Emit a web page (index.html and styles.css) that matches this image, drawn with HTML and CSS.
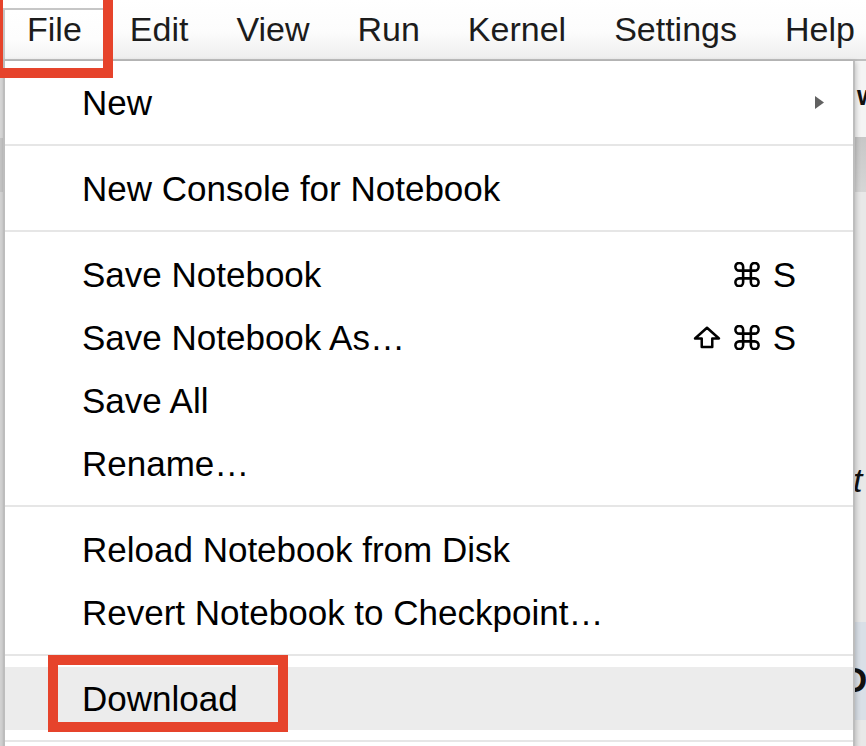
FILE: index.html
```html
<!DOCTYPE html>
<html lang="en">
<head>
<meta charset="utf-8">
<title>File menu</title>
<link rel="stylesheet" href="styles.css">
</head>
<body>
<div class="app">
  <header class="menubar">
    <div class="mb-item active">File</div>
    <div class="mb-item">Edit</div>
    <div class="mb-item">View</div>
    <div class="mb-item">Run</div>
    <div class="mb-item">Kernel</div>
    <div class="mb-item">Settings</div>
    <div class="mb-item">Help</div>
  </header>

  <div class="workspace">
    <div class="edge edge-left">
      <div class="seg l-tab"></div>
      <div class="seg l-toolbar"></div>
      <div class="seg l-rest"></div>
    </div>
    <div class="canvas"></div>
    <div class="edge edge-right">
      <div class="seg r-tab"><span class="peek peek-w">w</span></div>
      <div class="seg r-toolbar"></div>
      <div class="seg r-nb"><span class="peek peek-t">t</span></div>
      <div class="seg r-cell"><span class="peek peek-d">D</span></div>
      <div class="seg r-rest"></div>
    </div>
  </div>

  <nav class="dropdown">
    <div class="item">
      <span class="label">New</span>
      <svg class="sub-arrow" width="9" height="13" viewBox="0 0 9 13"><polygon points="0,0 9,6.5 0,13" fill="#616161"/></svg>
    </div>
    <div class="sep"></div>
    <div class="item"><span class="label">New Console for Notebook</span></div>
    <div class="sep"></div>
    <div class="item">
      <span class="label">Save Notebook</span>
      <span class="keys">
        <svg class="k-cmd" width="28" height="25" viewBox="1.8 2.3 20.4 19.4" fill="none" stroke="#000" stroke-width="2" stroke-linecap="round" stroke-linejoin="round"><path d="M15 6v12a3 3 0 1 0 3-3H6a3 3 0 1 0 3 3V6a3 3 0 1 0-3 3h12a3 3 0 1 0-3-3"/></svg>
        <span class="k-letter">S</span>
      </span>
    </div>
    <div class="item">
      <span class="label">Save Notebook As…</span>
      <span class="keys">
        <svg class="k-shift" width="28" height="23" viewBox="0 0 29 24" fill="none" stroke="#000" stroke-width="2.6" stroke-linejoin="round"><path d="M14.5 1.8 L27 13 H20 V22 H9 V13 H2 Z"/></svg>
        <svg class="k-cmd" width="28" height="25" viewBox="1.8 2.3 20.4 19.4" fill="none" stroke="#000" stroke-width="2" stroke-linecap="round" stroke-linejoin="round"><path d="M15 6v12a3 3 0 1 0 3-3H6a3 3 0 1 0 3 3V6a3 3 0 1 0-3 3h12a3 3 0 1 0-3-3"/></svg>
        <span class="k-letter">S</span>
      </span>
    </div>
    <div class="item"><span class="label">Save All</span></div>
    <div class="item"><span class="label">Rename…</span></div>
    <div class="sep"></div>
    <div class="item"><span class="label">Reload Notebook from Disk</span></div>
    <div class="item"><span class="label">Revert Notebook to Checkpoint…</span></div>
    <div class="sep"></div>
    <div class="item hover"><span class="label">Download</span></div>
    <div class="sep"></div>
  </nav>

  <div class="callout callout-file"></div>
  <div class="callout callout-download"></div>
</div>
</body>
</html>
```

FILE: styles.css
```css
html, body {
  margin: 0;
  padding: 0;
  background: #ffffff;
}

body {
  font-family: "Liberation Sans", Arial, sans-serif;
}

.app {
  position: relative;
  width: 866px;
  height: 746px;
  overflow: hidden;
  display: flex;
  flex-direction: column;
  background: #e9e9e9;
}

/* ---------- menubar ---------- */
.menubar {
  display: flex;
  align-items: flex-end;
  height: 59px;
  padding-left: 3px;
  border-bottom: 2px solid #bfbfbf;
  background: linear-gradient(to bottom, #ffffff 0%, #fcfcfc 55%, #eeeeee 100%);
  font-size: 34px;
  color: #1c1c1c;
  flex: none;
}

.mb-item {
  box-sizing: border-box;
  height: 51px;
  display: flex;
  align-items: center;
  padding: 0 22px 10px 22px;
  border: 2px solid transparent;
  border-bottom: 0;
  white-space: nowrap;
}

.mb-item.active {
  border-color: #c6c6c6;
  background: linear-gradient(to bottom, #ffffff 0%, #fdfdfd 60%, #f3f3f3 100%);
}

/* ---------- page behind the menu ---------- */
.workspace {
  flex: 1;
  display: grid;
  grid-template-columns: 3px 1fr 11px;
}

.edge {
  display: flex;
  flex-direction: column;
  overflow: hidden;
}

.seg {
  flex: none;
  overflow: hidden;
  white-space: nowrap;
}

.edge-left {
  background: #d6d6d6;
}
.l-tab { height: 77px; background: #dadada; }
.l-toolbar { height: 54px; background: #c6c6c6; }
.l-rest { flex: 1; background: #d6d6d6; }

.canvas {
  background: #ffffff;
}

.edge-right {
  background: #e9e9e9;
}
.r-tab { height: 76px; background: #f4f4f4; }
.r-toolbar { height: 55px; background: linear-gradient(to bottom, #c7c7c7, #d6d6d6); }
.r-nb { height: 430px; background: #e8e8e8; }
.r-cell { height: 98px; background: #d9dfe7; }
.r-rest { flex: 1; background: #e8e8e8; }

.peek {
  display: block;
  color: #111111;
}

.peek-w {
  font-size: 27px;
  line-height: 27px;
  font-weight: bold;
  padding-top: 22px;
  padding-left: 2px;
}

.peek-t {
  font-size: 34px;
  line-height: 34px;
  font-style: italic;
  padding-top: 271px;
  margin-left: -2px;
}

.peek-d {
  font-size: 35px;
  line-height: 35px;
  font-weight: bold;
  padding-top: 40px;
  margin-left: -13px;
}

/* ---------- dropdown menu ---------- */
.dropdown {
  position: absolute;
  left: 3px;
  top: 61px;
  width: 852px;
  height: 700px;
  box-sizing: border-box;
  padding-top: 10px;
  border: 2px solid #bdbdbd;
  border-top: 0;
  border-bottom: 0;
  background: #ffffff;
  box-shadow: 1px 1px 5px rgba(0, 0, 0, 0.22);
  font-size: 35px;
  color: #000000;
}

.item {
  height: 63px;
  display: flex;
  align-items: center;
  justify-content: space-between;
  padding: 0 57px 0 77px;
  white-space: nowrap;
}

.item.hover {
  background: #ececec;
}

.sep {
  height: 2px;
  margin: 10px 0 11px;
  background: #e6e6e6;
}

.sub-arrow {
  margin-right: -28px;
}

.keys {
  display: flex;
  align-items: center;
  gap: 12px;
}

.k-cmd,
.k-shift {
  display: block;
}

.k-letter {
  display: block;
  line-height: 35px;
}

/* ---------- annotation callouts ---------- */
.callout {
  position: absolute;
  box-sizing: border-box;
  border: 10px solid #e6432b;
}

.callout-file {
  left: -7px;
  top: -10px;
  width: 120px;
  height: 88px;
}

.callout-download {
  left: 48px;
  top: 655px;
  width: 240px;
  height: 77px;
}
```
